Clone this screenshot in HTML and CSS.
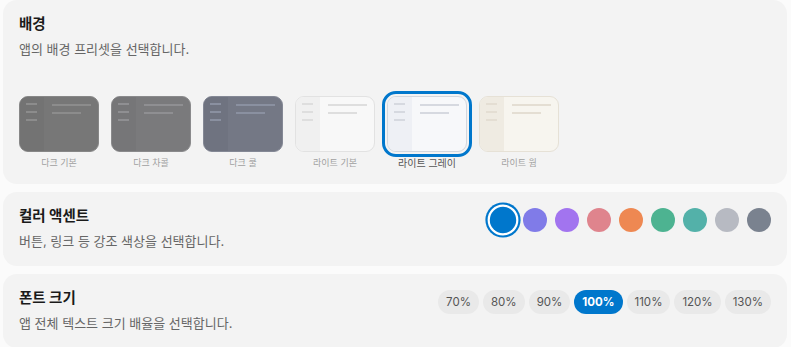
FILE: index.html
```html
<!DOCTYPE html>
<html lang="ko">

<head>
    <meta charset="UTF-8">
    <meta name="viewport" content="width=device-width, initial-scale=1.0">
    <title>설정</title>
    <link rel="stylesheet" href="styles.css">
</head>

<body>
    <div id="wrap">
        <div class="card bgCard">
            <div class="info">
                <h3>배경</h3>
                <p>앱의 배경 프리셋을 선택합니다.</p>
            </div>
            <div class="presets">
                <div class="preset">
                    <div class="thumb darkBase">
                        <div class="side"><i></i><i></i><i></i></div>
                        <div class="main"><i></i><i></i></div>
                    </div>
                    <span>다크 기본</span>
                </div>
                <div class="preset">
                    <div class="thumb darkCharcoal">
                        <div class="side"><i></i><i></i><i></i></div>
                        <div class="main"><i></i><i></i></div>
                    </div>
                    <span>다크 차콜</span>
                </div>
                <div class="preset">
                    <div class="thumb darkCool">
                        <div class="side"><i></i><i></i><i></i></div>
                        <div class="main"><i></i><i></i></div>
                    </div>
                    <span>다크 쿨</span>
                </div>
                <div class="preset">
                    <div class="thumb lightBase">
                        <div class="side"><i></i><i></i><i></i></div>
                        <div class="main"><i></i><i></i></div>
                    </div>
                    <span>라이트 기본</span>
                </div>
                <div class="preset active">
                    <div class="thumb lightGray">
                        <div class="side"><i></i><i></i><i></i></div>
                        <div class="main"><i></i><i></i></div>
                    </div>
                    <span>라이트 그레이</span>
                </div>
                <div class="preset">
                    <div class="thumb lightWarm">
                        <div class="side"><i></i><i></i><i></i></div>
                        <div class="main"><i></i><i></i></div>
                    </div>
                    <span>라이트 웜</span>
                </div>
            </div>
        </div>

        <div class="card row">
            <div class="info">
                <h3>컬러 액센트</h3>
                <p>버튼, 링크 등 강조 색상을 선택합니다.</p>
            </div>
            <div class="swatches">
                <span class="swatch active" style="background:#0077cc"></span>
                <span class="swatch" style="background:#807be8"></span>
                <span class="swatch" style="background:#a274ef"></span>
                <span class="swatch" style="background:#df848d"></span>
                <span class="swatch" style="background:#ee8852"></span>
                <span class="swatch" style="background:#4db391"></span>
                <span class="swatch" style="background:#53b1a9"></span>
                <span class="swatch" style="background:#b7bac2"></span>
                <span class="swatch" style="background:#7a828f"></span>
            </div>
        </div>

        <div class="card row">
            <div class="info">
                <h3>폰트 크기</h3>
                <p>앱 전체 텍스트 크기 배율을 선택합니다.</p>
            </div>
            <div class="sizes">
                <span class="pill">70%</span>
                <span class="pill">80%</span>
                <span class="pill">90%</span>
                <span class="pill active">100%</span>
                <span class="pill">110%</span>
                <span class="pill">120%</span>
                <span class="pill">130%</span>
            </div>
        </div>
    </div>
</body>

</html>
```

FILE: styles.css
```css
body {
    margin: 0;
    background: #fbfbfb;
    font-family: "Inter", "Noto Sans CJK KR", sans-serif;
}

#wrap {
    display: flex;
    flex-direction: column;
    gap: 8px;
    padding: 0 4px 0 3px;
}

.card {
    background: #f3f3f3;
    border-radius: 14px;
    padding: 15px 16px 16px;
}

.bgCard {
    padding-bottom: 14px;
}

.row {
    display: flex;
    justify-content: space-between;
    align-items: flex-start;
}

.info h3 {
    margin: 0;
    font-size: 14.5px;
    line-height: 18px;
    font-weight: 700;
    color: #1a1a1a;
}

.info p {
    margin: 7px 0 0;
    font-size: 13px;
    line-height: 18px;
    color: #666;
}

/* 배경 프리셋 */
.presets {
    display: flex;
    gap: 12px;
    margin-top: 38px;
}

.preset {
    display: flex;
    flex-direction: column;
    align-items: center;
    width: 80px;
}

.preset span {
    margin-top: 4px;
    font-size: 9px;
    line-height: 14px;
    color: #9f9f9f;
}

.preset.active span {
    font-size: 10px;
    color: #555;
}

.thumb {
    display: flex;
    box-sizing: border-box;
    width: 80px;
    height: 56px;
    border-radius: 9px;
    border: 1px solid;
    overflow: hidden;
}

.preset.active .thumb {
    outline: 3px solid #0077cc;
    outline-offset: 2px;
}

.side {
    width: 24px;
    padding: 6px 0 0 6px;
    box-sizing: border-box;
}

.side i {
    display: block;
    width: 11px;
    height: 2px;
    margin-bottom: 6px;
}

.main {
    flex: 1;
    padding: 7px 0 0 8px;
}

.main i {
    display: block;
    width: 39px;
    height: 2px;
    margin-bottom: 6px;
}

.main i + i {
    width: 29px;
}

.darkBase { background: #777; border-color: #878787; }
.darkBase .side { background: #737373; }
.darkBase i { background: #8c8c8c; }

.darkCharcoal { background: #7a7a7c; border-color: #8a8a8c; }
.darkCharcoal .side { background: #767678; }
.darkCharcoal i { background: #8f8f92; }

.darkCool { background: #747885; border-color: #848895; }
.darkCool .side { background: #6f7380; }
.darkCool i { background: #8a90a0; }

.lightBase { background: #f8f8f8; border-color: #e2e2e2; }
.lightBase .side { background: #f0f0f0; }
.lightBase i { background: #dedede; }

.lightGray { background: #f7f8fa; border-color: #d3d7de; }
.lightGray .side { background: #eef0f5; }
.lightGray i { background: #d6d9e0; }

.lightWarm { background: #f7f5ef; border-color: #e6e1d6; }
.lightWarm .side { background: #efebe2; }
.lightWarm i { background: #e4ded3; }

/* 컬러 */
.swatches {
    display: flex;
    gap: 8px;
    margin-top: 1px;
}

.swatch {
    width: 24px;
    height: 24px;
    border-radius: 50%;
}

.swatch.active {
    transform: scale(1.1);
    box-shadow: 0 0 0 2px #fff, 0 0 0 4px #0077cc;
}

/* 폰트 크기 */
.sizes {
    display: flex;
    gap: 4px;
    margin-top: 1px;
}

.pill {
    height: 24px;
    padding: 0 8px;
    border-radius: 12px;
    background: #e9e9e9;
    color: #555;
    font-size: 11.5px;
    line-height: 24px;
}

.pill.active {
    background: #0077cc;
    color: #fff;
    font-weight: 700;
}
```
